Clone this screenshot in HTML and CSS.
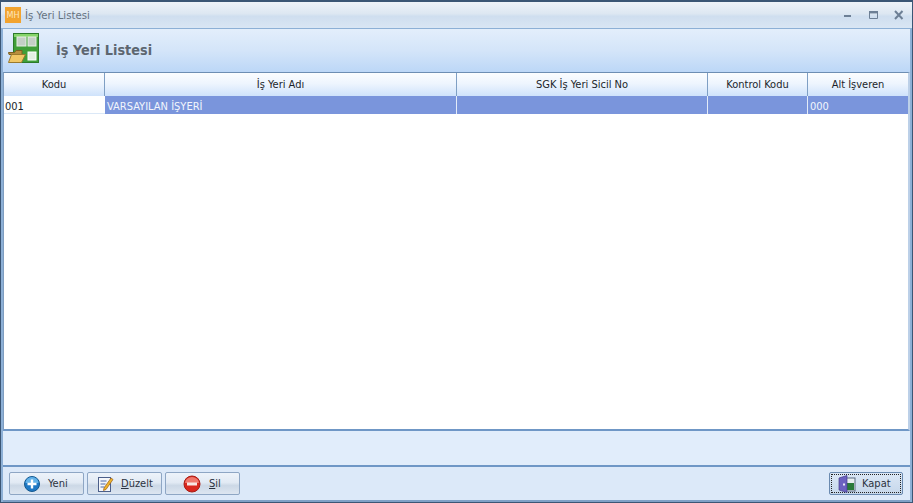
FILE: index.html
```html
<!DOCTYPE html>
<html lang="tr">
<head>
<meta charset="utf-8">
<title>İş Yeri Listesi</title>
<link rel="stylesheet" href="styles.css">
</head>
<body>
<div class="window">
  <div class="titlebar">
    <div class="app-logo">MH</div>
    <span class="title-text">İş Yeri Listesi</span>
    <div class="win-controls">
      <svg class="ctl" width="12" height="12" viewBox="0 0 12 12"><rect x="1" y="6" width="7" height="2" fill="#6d7f95"/></svg>
      <svg class="ctl" width="12" height="12" viewBox="0 0 12 12"><path d="M1.500 2.500h8v7h-8z" fill="none" stroke="#6d7f95"/><rect x="1" y="2" width="9" height="2.400" fill="#6d7f95"/></svg>
      <svg class="ctl" width="12" height="12" viewBox="0 0 12 12"><path d="M2 2l7.500 8M9.500 2L2 10" stroke="#6d7f95" stroke-width="2" fill="none"/></svg>
    </div>
  </div>
  <div class="body">
    <div class="header">
      <svg class="header-icon" width="32" height="32" viewBox="0 0 32 32">
        <rect x="5.500" y="1.500" width="25" height="29" fill="#3f9e38" stroke="#2c7a2a"/>
        <rect x="6" y="2" width="24" height="3" fill="#86d46a"/>
        <rect x="9" y="5" width="9" height="9" fill="#c4cfc6" stroke="#e6efe3"/>
        <rect x="20" y="5" width="8" height="9" fill="#c4cfc6" stroke="#e6efe3"/>
        <rect x="20" y="20" width="8" height="8" fill="#e4efe4" stroke="#ffffff"/>
        <path d="M.500 20.500h6l1.500-2h6v4h-13z" fill="#b88f3e" stroke="#7e6020"/>
        <path d="M3.500 22.500h14l-4 8H.500z" fill="#f0c765" stroke="#9a7a2c"/>
      </svg>
      <span class="header-title">İş Yeri Listesi</span>
    </div>
    <div class="grid">
      <div class="row head">
        <div class="cell c1">Kodu</div>
        <div class="cell c2">İş Yeri Adı</div>
        <div class="cell c3">SGK İş Yeri Sicil No</div>
        <div class="cell c4">Kontrol Kodu</div>
        <div class="cell c5">Alt İşveren</div>
      </div>
      <div class="row data">
        <div class="cell c1 focus">001</div>
        <div class="cell c2">VARSAYILAN İŞYERİ</div>
        <div class="cell c3"></div>
        <div class="cell c4"></div>
        <div class="cell c5">000</div>
      </div>
    </div>
    <div class="status"></div>
    <div class="footer">
      <button class="btn btn-yeni">
        <svg width="18" height="18" viewBox="0 0 18 18"><circle cx="9" cy="9" r="7.500" fill="#1f78c4" stroke="#15598f"/><path d="M2.500 8a6.500 6 0 0 1 13 0z" fill="#63b2e8"/><path d="M9 4.500v9M4.500 9h9" stroke="#fff" stroke-width="2.400"/></svg>
        <span>Yeni</span>
      </button>
      <button class="btn btn-duzelt">
        <svg width="18" height="18" viewBox="0 0 18 18"><rect x="2.500" y="2.500" width="12" height="14" fill="#f4f6fa" stroke="#4c5f8a"/><path d="M4.500 6h6M4.500 9h5M4.500 12h4" stroke="#4c6aa8"/><path d="M8 13l7-10 2 1.500-7 10-2.500 1z" fill="#f0b52c" stroke="#9a5c12" stroke-width=".7"/></svg>
        <span><u>D</u>üzelt</span>
      </button>
      <button class="btn btn-sil">
        <svg width="18" height="18" viewBox="0 0 18 18"><circle cx="9" cy="9" r="8" fill="#d9261c" stroke="#a81c14"/><path d="M2 8a7 6 0 0 1 14 0z" fill="#f0786c"/><rect x="4" y="7.500" width="10" height="3" fill="#f7e6e2"/></svg>
        <span><u>S</u>il</span>
      </button>
      <button class="btn btn-kapat">
        <span class="focus-ring">
          <svg width="18" height="18" viewBox="0 0 18 18"><rect x="8" y="3" width="9" height="13" fill="#e8eef0" stroke="#5a6a80"/><rect x="9" y="8" width="7" height="7" fill="#2a7a3a"/><path d="M1 3l8-2.500v17L1 15z" fill="#6c62c0" stroke="#453d8c" stroke-width=".7"/><rect x="5" y="8.500" width="2" height="2" fill="#e8e8f8"/></svg>
          <span>Kapat</span>
        </span>
      </button>
    </div>
  </div>
</div>
</body>
</html>
```
FILE: styles.css
```css
* { box-sizing: border-box; }
html, body { margin: 0; padding: 0; height: 100%; overflow: hidden; }
body { font-family: "DejaVu Sans", sans-serif; font-stretch: condensed; font-size: 11px; color: #1b1f2a; }

.window {
  width: 913px;
  height: 503px;
  display: flex;
  flex-direction: column;
  border: 1px solid #3b5675;
  border-top: 2px solid #3b5675;
  background: #dbe8f7;
}

.titlebar {
  height: 26px;
  flex: none;
  display: flex;
  align-items: center;
  padding: 0 7px 0 4px;
  background: linear-gradient(#eef3f9 0%, #dde7f2 45%, #cfdeef 55%, #d9e6f4 100%);
}
.app-logo {
  width: 16px;
  height: 16px;
  background: #f2a32e;
  color: #fde6bf;
  font-size: 9px;
  line-height: 16px;
  text-align: center;
}
.title-text { margin-left: 4px; color: #66727f; font-size: 11.300px; }
.win-controls { margin-left: auto; display: flex; gap: 13px; }
.ctl { display: block; }

.body {
  flex: 1;
  min-height: 0;
  display: flex;
  flex-direction: column;
  border-style: solid;
  border-width: 1px 2px 0;
  border-color: #8db0d6;
}

.header {
  height: 43px;
  flex: none;
  display: flex;
  align-items: center;
  padding-left: 5px;
  background: linear-gradient(#e3eefb 0%, #d4e5f9 50%, #bcd7f7 100%);
}
.header-icon { display: block; margin-bottom: 5px; }
.header-title {
  margin-left: 16px;
  margin-bottom: 2px;
  font-size: 14.300px;
  font-weight: 700;
  color: #5d6670;
}

.grid {
  flex: 1;
  min-height: 0;
  background: #fff;
  border-top: 1px solid #6d8eb3;
  border-bottom: 2px solid #6f97c6;
  border-left: 1px solid #7f9dc0;
  border-right: 2px solid #bcd0e8;
}
.row { display: flex; }
.head {
  height: 23px;
  background: linear-gradient(#fbfdff 0%, #eef5fe 45%, #cfe2fb 100%);
  align-items: stretch;
}
.head .cell {
  display: flex;
  align-items: center;
  justify-content: center;
  border-right: 1px solid #7f9fc4;
}
.head .cell:last-child { border-right: none; }
.data { height: 18px; background: #7a95dc; color: #f2f5fc; }
.data .cell { padding: 2px 0 0 2px; line-height: 17px; border-right: 1px solid #e3ebf8; white-space: nowrap; }
.data .cell:last-child { border-right: none; }
.data .focus { background: #fff; color: #1b1f2a; padding-left: 1px; border-right: none; border-bottom: 1px solid #dbe8f7; }
.c1 { width: 101px; flex: none; }
.c2 { width: 352px; flex: none; }
.c3 { width: 251px; flex: none; }
.c4 { width: 100px; flex: none; }
.c5 { flex: 1; }

.status {
  height: 34px;
  flex: none;
  background: #e1edfb;
}

.footer {
  height: 37px;
  flex: none;
  display: flex;
  align-items: center;
  gap: 3px;
  padding: 0 7px 0 6px;
  border-top: 2px solid #6f97c6;
  background: #dce9f9;
  border-bottom: 2px solid #7fa0c6;
}
.btn {
  height: 23px;
  padding: 0;
  display: flex;
  align-items: center;
  font: inherit;
  font-stretch: condensed;
  color: #2b3240;
  border: 1px solid #8ea6c4;
  border-radius: 2px;
  background: linear-gradient(#edf3fa 0%, #e2eaf4 45%, #ccd8e6 60%, #dde6f1 100%);
}
.btn svg { display: block; flex: none; }
.btn-yeni { width: 75px; padding-left: 13px; gap: 7px; }
.btn-duzelt { width: 75px; padding-left: 8px; gap: 7px; }
.btn-sil { width: 75px; padding-left: 17px; gap: 8px; }
.btn-kapat { width: 74px; margin-left: auto; padding: 1px; background: linear-gradient(#dbe7f6, #c6d7ea); border-color: #6a8ab0; }
.focus-ring {
  flex: 1;
  height: 100%;
  display: flex;
  align-items: center;
  gap: 6px;
  padding-left: 6px;
  border: 1px dotted #222;
}
```
